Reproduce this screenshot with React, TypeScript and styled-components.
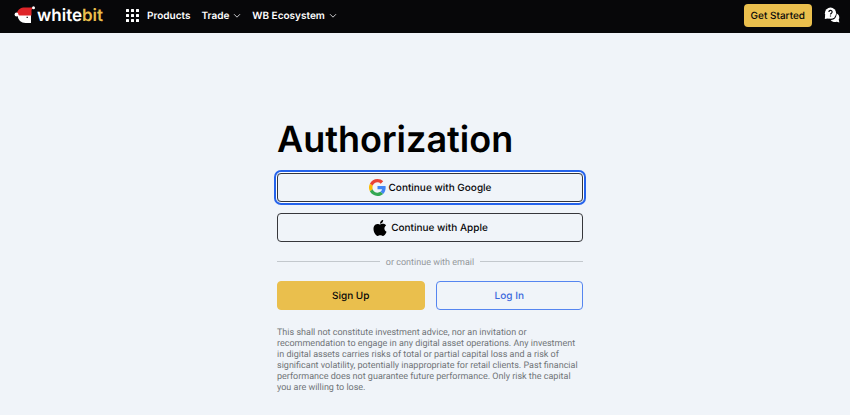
import React from "react";
import styled, { createGlobalStyle } from "styled-components";

const GlobalStyle = createGlobalStyle`
  *, *::before, *::after { box-sizing: border-box; }
  body {
    margin: 0;
    background: #f0f4f9;
    color: #070709;
    font-family: Inter, "Liberation Sans", sans-serif;
    text-rendering: geometricPrecision;
  }
  button { font-family: inherit; text-rendering: inherit; cursor: pointer; }
`;

const Header = styled.header`
  display: flex;
  align-items: center;
  height: 33px;
  padding: 0 10px 3px 14px;
  background: #070709;
  color: #fff;
`;

const LogoLink = styled.a`
  display: flex;
  align-items: center;
  gap: 1px;
  color: #fff;
  text-decoration: none;
`;

const Wordmark = styled.span`
  padding-top: 2px;
  font-size: 17px;
  line-height: 20px;
  font-weight: 600;
`;

const Gold = styled.span`
  color: #eabf4d;
`;

const Nav = styled.nav`
  display: flex;
  align-items: center;
  gap: 11px;
  margin-left: 23px;
`;

const NavButton = styled.button<{ $gap: number }>`
  display: flex;
  align-items: center;
  gap: ${({ $gap }) => $gap}px;
  padding: 1px 0 0;
  border: 0;
  background: none;
  color: #fff;
  font-size: 10px;
  line-height: 16px;
  font-weight: 600;
`;

const Actions = styled.div`
  display: flex;
  align-items: center;
  gap: 12px;
  margin-left: auto;
`;

const StartButton = styled.button`
  height: 23px;
  padding: 1px 7px 0;
  border: 0;
  border-radius: 4px;
  background: #eabf4d;
  color: #070709;
  font-size: 10px;
  line-height: 16px;
  font-weight: 500;
`;

const IconButton = styled.button`
  display: flex;
  padding: 0;
  border: 0;
  background: none;
  color: #fff;
`;

const Main = styled.main`
  display: flex;
  justify-content: center;
  padding: 84px 0 20px 10px;
`;

const Content = styled.div`
  display: flex;
  flex: 0 1 306px;
  flex-direction: column;
`;

const Title = styled.h1`
  margin: 0 0 12px;
  font-size: 36px;
  line-height: 44px;
  font-weight: 600;
  font-optical-sizing: none;
  color: #000;
`;

const Stack = styled.div`
  display: flex;
  flex-direction: column;
  gap: 11px;
`;

const Button = styled.button<{ $tone: "dark" | "gold" | "blue"; $focused?: boolean }>`
  display: flex;
  flex: 1;
  align-items: center;
  justify-content: center;
  gap: 3px;
  min-height: 29px;
  padding: 0;
  border: 1px solid
    ${({ $tone }) => ($tone === "dark" ? "#36373b" : $tone === "gold" ? "#eabf4d" : "#5585f0")};
  border-radius: 4px;
  background: ${({ $tone }) => ($tone === "gold" ? "#eabf4d" : "transparent")};
  color: ${({ $tone }) => ($tone === "blue" ? "#3a68dc" : "#070709")};
  font-size: 10px;
  line-height: 16px;
  font-weight: 500;
  ${({ $focused }) =>
    $focused ? "box-shadow: 0 0 0 1px #fff, 0 0 0 3px #2563eb;" : ""}
`;

const Divider = styled.div`
  display: flex;
  align-items: center;
  gap: 6px;
  margin: 15px 0 12px;
  color: #94989c;
  font-family: Roboto, sans-serif;
  font-size: 9px;
  line-height: 12px;

  &::before,
  &::after {
    content: "";
    flex: 1;
    height: 1px;
    margin-bottom: 4px;
    background: #c3c8cd;
  }
`;

const Pair = styled.div`
  display: flex;
  gap: 11px;
`;

const Notice = styled.p`
  margin: 18px 0 0;
  color: #717478;
  font-family: Roboto, sans-serif;
  font-size: 9px;
  line-height: 11px;
`;

const LogoMark = () => (
  <svg width="22" height="20" viewBox="0 0 22 20" aria-hidden="true">
    <path d="M5 9 17 8v10h-5.500C7 18 4 15 3.500 10.500Z" fill="#fff" />
    <path d="M2.500 9C4 4 6.500 2.500 11 2.500H19L17.500 5v5.500L5.500 10.500Z" fill="#df2529" />
    <circle cx="2.500" cy="9.500" r="1.900" fill="#fff" />
    <circle cx="19.500" cy="2.800" r="1.500" fill="#fff" />
    <path d="M12.500 12.300h1.500" stroke="#070709" />
  </svg>
);

const GridIcon = () => (
  <svg width="13" height="13" viewBox="0 0 13 13" fill="currentColor" aria-hidden="true">
    {[0, 5, 10].map((y) => [0, 5, 10].map((x) => (
      <rect key={`${x}-${y}`} x={x} y={y} width="3" height="3" rx=".5" />
    )))}
  </svg>
);

const Chevron = () => (
  <svg width="8" height="8" viewBox="0 0 8 8" fill="none" stroke="#c9cacc" aria-hidden="true">
    <path d="m1 2.200 3 3 3-3" />
  </svg>
);

const HelpIcon = () => (
  <svg width="16" height="16" viewBox="0 0 16 16" fill="currentColor" aria-hidden="true">
    <path d="M12.700 6.500c1.700.8 2.600 2.100 2.600 3.900 0 .8-.2 1.500-.6 2.100l.7 2.900-2.700-.7c-2.300.7-4.700 0-6-1.800 3.300.3 6-2.400 6-6.400Z" />
    <circle cx="6.500" cy="6.200" r="5.600" />
    <path d="M1.200 7.500.8 12l4.200-.8Z" />
    <path d="M4.900 5a1.600 1.600 0 1 1 2.500 1.300c-.6.400-.9.600-.9 1.200M6.500 8.500v1" fill="none" stroke="#070709" strokeWidth="1.200" />
  </svg>
);

const GoogleIcon = () => (
  <svg width="17" height="17" viewBox="0 0 48 48" aria-hidden="true">
    <path fill="#ea4335" d="M24 9.500c3.500 0 6.700 1.200 9.200 3.600l6.900-6.900C35.900 2.400 30.500 0 24 0 14.600 0 6.500 5.400 2.600 13.200l8 6.200C12.400 13.700 17.700 9.500 24 9.500Z" />
    <path fill="#4285f4" d="M47 24.600c0-1.600-.2-3.100-.4-4.600H24v9h12.900c-.6 3-2.200 5.500-4.700 7.200l7.700 6C44.400 38 47 31.800 47 24.600Z" />
    <path fill="#fbbc05" d="M10.500 28.600A14.500 14.500 0 0 1 10.600 19.400l-8-6.200a24 24 0 0 0 0 21.600Z" />
    <path fill="#34a853" d="M24 48c6.500 0 11.900-2.100 15.900-5.800l-7.700-6c-2.200 1.500-4.900 2.300-8.200 2.300-6.300 0-11.600-4.200-13.500-9.900l-8 6.200C6.500 42.600 14.600 48 24 48Z" />
  </svg>
);

const AppleIcon = () => (
  <svg width="16" height="16" viewBox="1 0 22 24" fill="#000" aria-hidden="true">
    <path d="M12.152 6.896c-.948 0-2.415-1.078-3.960-1.040-2.040.027-3.910 1.183-4.961 3.014-2.117 3.675-.546 9.103 1.519 12.090 1.013 1.454 2.208 3.090 3.792 3.039 1.520-.065 2.090-.987 3.935-.987 1.831 0 2.350.987 3.960.948 1.637-.026 2.676-1.480 3.676-2.948 1.156-1.688 1.636-3.325 1.662-3.415-.039-.013-3.182-1.221-3.220-4.857-.026-3.040 2.480-4.494 2.597-4.559-1.429-2.090-3.623-2.324-4.390-2.376-2-.156-3.675 1.090-4.610 1.090ZM15.530 3.830c.843-1.012 1.400-2.427 1.245-3.830-1.207.052-2.662.805-3.532 1.818-.780.896-1.454 2.338-1.273 3.714 1.338.104 2.715-.688 3.559-1.701" />
  </svg>
);

export default function App() {
  return (
    <>
      <GlobalStyle />
      <Header>
        <LogoLink href="#" aria-label="whitebit">
          <LogoMark />
          <Wordmark>white<Gold>bit</Gold></Wordmark>
        </LogoLink>
        <Nav>
          <NavButton type="button" $gap={8}><GridIcon />Products</NavButton>
          <NavButton type="button" $gap={4}>Trade<Chevron /></NavButton>
          <NavButton type="button" $gap={4}>WB Ecosystem<Chevron /></NavButton>
        </Nav>
        <Actions>
          <StartButton type="button">Get Started</StartButton>
          <IconButton type="button" aria-label="Help"><HelpIcon /></IconButton>
        </Actions>
      </Header>
      <Main>
        <Content>
          <Title>Authorization</Title>
          <Stack>
            <Button type="button" $tone="dark" $focused><GoogleIcon />Continue with Google</Button>
            <Button type="button" $tone="dark"><AppleIcon />Continue with Apple</Button>
          </Stack>
          <Divider>or continue with email</Divider>
          <Pair>
            <Button type="button" $tone="gold">Sign Up</Button>
            <Button type="button" $tone="blue">Log In</Button>
          </Pair>
          <Notice>
            This shall not constitute investment advice, nor an invitation or recommendation to
            engage in any digital asset operations. Any investment in digital assets carries risks
            of total or partial capital loss and a risk of significant volatility, potentially
            inappropriate for retail clients. Past financial performance does not guarantee future
            performance. Only risk the capital you are willing to lose.
          </Notice>
        </Content>
      </Main>
    </>
  );
}
